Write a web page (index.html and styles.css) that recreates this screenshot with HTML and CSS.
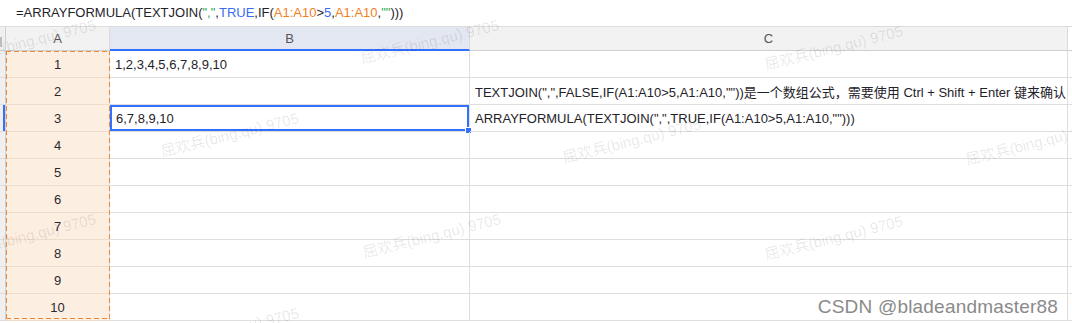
FILE: index.html
```html
<!DOCTYPE html>
<html lang="zh-CN">
<head>
  <meta charset="UTF-8" />
  <title>Sheet</title>
  <link rel="stylesheet" href="styles.css">
</head>
<body>
  <div class="formula-bar">
    =ARRAYFORMULA(TEXTJOIN(<span class="str">","</span>,<span class="num">TRUE</span>,IF(<span class="ref">A1:A10</span>&gt;<span class="num">5</span>,<span class="ref">A1:A10</span>,<span class="str">""</span>)))
  </div>

  <div class="sheet">
    <div class="grid">
      <div class="gutter head"><span class="grip"></span></div>
      <div class="col-head">A</div>
      <div class="col-head active">B</div>
      <div class="col-head">C</div>
      <div class="col-head end"></div>

      <div class="gutter"></div><div class="cell num-a">1</div><div class="cell">1,2,3,4,5,6,7,8,9,10</div><div class="cell"></div><div class="cell end"></div>
      <div class="gutter"></div><div class="cell num-a">2</div><div class="cell"></div><div class="cell">TEXTJOIN(",",FALSE,IF(A1:A10&gt;5,A1:A10,""))是一个数组公式，需要使用 Ctrl + Shift + Enter 键来确认</div><div class="cell end"></div>
      <div class="gutter current"></div><div class="cell num-a">3</div><div class="cell selected">6,7,8,9,10</div><div class="cell">ARRAYFORMULA(TEXTJOIN(",",TRUE,IF(A1:A10&gt;5,A1:A10,"")))</div><div class="cell end"></div>
      <div class="gutter"></div><div class="cell num-a">4</div><div class="cell"></div><div class="cell"></div><div class="cell end"></div>
      <div class="gutter"></div><div class="cell num-a">5</div><div class="cell"></div><div class="cell"></div><div class="cell end"></div>
      <div class="gutter"></div><div class="cell num-a">6</div><div class="cell"></div><div class="cell"></div><div class="cell end"></div>
      <div class="gutter"></div><div class="cell num-a">7</div><div class="cell"></div><div class="cell"></div><div class="cell end"></div>
      <div class="gutter"></div><div class="cell num-a">8</div><div class="cell"></div><div class="cell"></div><div class="cell end"></div>
      <div class="gutter"></div><div class="cell num-a">9</div><div class="cell"></div><div class="cell"></div><div class="cell end"></div>
      <div class="gutter"></div><div class="cell num-a">10</div><div class="cell"></div><div class="cell"></div><div class="cell end"></div>
    </div>
    <div class="marquee"></div>
  </div>

  <div class="watermarks">
    <span class="wm" style="left:-40px;top:50px">屈欢兵(bing.qu) 9705</span>
    <span class="wm" style="left:363px;top:50px">屈欢兵(bing.qu) 9705</span>
    <span class="wm" style="left:767px;top:56px">屈欢兵(bing.qu) 9705</span>
    <span class="wm" style="left:163px;top:143px">屈欢兵(bing.qu) 9705</span>
    <span class="wm" style="left:565px;top:149px">屈欢兵(bing.qu) 9705</span>
    <span class="wm" style="left:968px;top:151px">屈欢兵(bing.qu) 9705</span>
    <span class="wm" style="left:-40px;top:244px">屈欢兵(bing.qu) 9705</span>
    <span class="wm" style="left:365px;top:244px">屈欢兵(bing.qu) 9705</span>
    <span class="wm" style="left:767px;top:246px">屈欢兵(bing.qu) 9705</span>
    <span class="wm" style="left:163px;top:338px">屈欢兵(bing.qu) 9705</span>
  </div>

  <div class="csdn">CSDN @bladeandmaster88</div>
</body>
</html>
```

FILE: styles.css
```css
* {
  box-sizing: border-box;
}
body {
  margin: 0;
  width: 1072px;
  height: 323px;
  overflow: hidden;
  position: relative;
  background: #fff;
  font-family: 'Liberation Sans', 'Noto Sans CJK SC', sans-serif;
  font-size: 13px;
  color: #1f2329;
}
.formula-bar {
  height: 27px;
  line-height: 26px;
  padding-left: 16px;
  border-bottom: 1px solid #dcdcdc;
  white-space: nowrap;
}
.formula-bar .str {
  color: #34a853;
}
.formula-bar .num {
  color: #3b6cf0;
}
.formula-bar .ref {
  color: #f2801f;
}
.sheet {
  position: relative;
  height: 296px;
  overflow: hidden;
}
.grid {
  display: grid;
  grid-template-columns: 6px 104px 360px 598px 1fr;
  grid-template-rows: 24px;
  grid-auto-rows: 27px;
}
.gutter {
  background: #f0f0f0;
  border-right: 1px solid #cfcfcf;
  border-bottom: 1px solid #dcdcdc;
  position: relative;
}
.gutter.head {
  border-bottom: 1px solid #cfcfcf;
}
.grip {
  position: absolute;
  left: 0;
  top: 10px;
  width: 2px;
  height: 10px;
  background: #bcbcbc;
}
.gutter.current {
  box-shadow: inset -2px 0 0 #3370ff;
}
.col-head {
  background: #f2f2f2;
  border-right: 1px solid #dcdcdc;
  border-bottom: 1px solid #cfcfcf;
  display: flex;
  align-items: center;
  justify-content: center;
  color: #555;
}
.col-head.active {
  background: #e3e7f1;
  border-bottom: 2px solid #3370ff;
  padding-top: 1px;
}
.col-head.end {
  background: #fff;
  border-right: none;
}
.cell {
  border-right: 1px solid #dedede;
  border-bottom: 1px solid #dedede;
  display: flex;
  align-items: center;
  padding: 0 5px;
  white-space: nowrap;
  position: relative;
}
.cell.end {
  border-right: none;
}
.num-a {
  background: #fdeee2;
  border-bottom-color: #f0dccb;
  justify-content: center;
  color: #2b2b2b;
}
.cell.selected {
  box-shadow: inset 0 0 0 2px #3370ff;
  padding-left: 6px;
}
.cell.selected::after {
  content: '';
  position: absolute;
  right: -3px;
  bottom: -3px;
  width: 5px;
  height: 5px;
  background: #3370ff;
  border: 1px solid #fff;
}
.marquee {
  position: absolute;
  left: 6px;
  top: 24px;
  width: 104px;
  height: 268px;
  background-image:
    repeating-linear-gradient(90deg, #f0883a 0 5px, transparent 5px 8px),
    repeating-linear-gradient(90deg, #f0883a 0 5px, transparent 5px 8px),
    repeating-linear-gradient(0deg, #f0883a 0 5px, transparent 5px 8px),
    repeating-linear-gradient(0deg, #f0883a 0 5px, transparent 5px 8px);
  background-size: 100% 1px, 100% 1px, 1px 100%, 1px 100%;
  background-position: 0 0, 0 100%, 0 0, 100% 0;
  background-repeat: no-repeat;
}
.watermarks {
  position: absolute;
  inset: 0;
  overflow: hidden;
  pointer-events: none;
}
.wm {
  position: absolute;
  font-size: 15px;
  line-height: 17px;
  white-space: nowrap;
  color: rgba(0, 0, 0, 0.1);
  transform: rotate(-14deg);
  transform-origin: left bottom;
}
.csdn {
  position: absolute;
  right: 14px;
  bottom: 5px;
  font-size: 19px;
  color: #8a8a8a;
  text-shadow: 0 0 2px #fff, 0 0 2px #fff;
  letter-spacing: 0.2px;
}
```
